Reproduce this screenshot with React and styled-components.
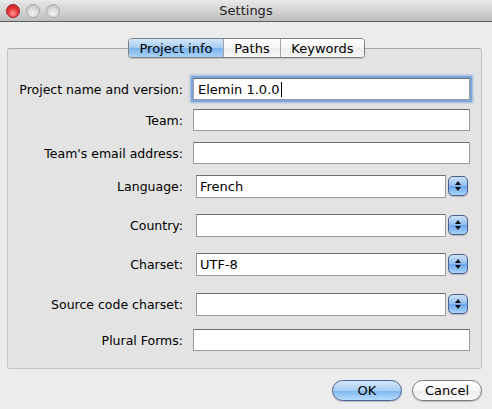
import styled, { createGlobalStyle } from "styled-components";

const GlobalStyle = createGlobalStyle`
  html, body {
    margin: 0;
    padding: 0;
    background: #ececec;
  }
  body {
    font-family: "DejaVu Sans", "Liberation Sans", sans-serif;
    color: #000;
  }
`;

const rows = [
  { label: "Project name and version:", value: "Elemin 1.0.0", focus: true, mt: 29 },
  { label: "Team:", value: "", mt: 9 },
  { label: "Team's email address:", value: "", mt: 11 },
  { label: "Language:", value: "French", combo: true, mt: 11 },
  { label: "Country:", value: "", combo: true, mt: 17 },
  { label: "Charset:", value: "UTF-8", combo: true, mt: 17 },
  { label: "Source code charset:", value: "", combo: true, mt: 18 },
  { label: "Plural Forms:", value: "", mt: 14 },
];

const tabs = [
  { name: "Project info", width: 94, active: true },
  { name: "Paths", width: 57 },
  { name: "Keywords", width: 84 },
];

const App = () => {
  return (
    <>
      <GlobalStyle />
      <Window>
        <TitleBar>
          <Lights>
            <Light $color="red" />
            <Light />
            <Light />
          </Lights>
          <Title>Settings</Title>
        </TitleBar>
        <Body>
          <TabBar>
            {tabs.map((t) => (
              <Tab key={t.name} $active={t.active} style={{ width: t.width }}>
                {t.name}
              </Tab>
            ))}
          </TabBar>
          <Panel>
            {rows.map((r) => (
              <Row key={r.label} $mt={r.mt}>
                <Label>{r.label}</Label>
                {r.combo ? (
                  <Combo>
                    <ComboField>{r.value}</ComboField>
                    <Stepper>
                      <svg width="8" height="12" viewBox="0 0 8 12">
                        <path d="M4 1 L7 5 L1 5 Z" fill="#111" />
                        <path d="M4 11 L7 7 L1 7 Z" fill="#111" />
                      </svg>
                    </Stepper>
                  </Combo>
                ) : (
                  <Field $focus={r.focus}>
                    {r.value}
                    {r.focus && <Caret />}
                  </Field>
                )}
              </Row>
            ))}
          </Panel>
          <ButtonBar>
            <PushButton $default>OK</PushButton>
            <PushButton>Cancel</PushButton>
          </ButtonBar>
        </Body>
      </Window>
    </>
  );
};

const Window = styled.div`
  width: 492px;
  height: 409px;
  background: #ececec;
  display: flex;
  flex-direction: column;
  overflow: hidden;
`;

const TitleBar = styled.div`
  height: 21px;
  border-bottom: 1px solid #5e5e5e;
  background: linear-gradient(#e9e9e9, #cfcfcf 60%, #bdbdbd);
  display: flex;
  align-items: center;
  position: relative;
`;

const Lights = styled.div`
  display: flex;
  gap: 6px;
  padding-left: 6px;
`;

const Light = styled.div`
  width: 14px;
  height: 14px;
  border-radius: 50%;
  box-sizing: border-box;
  border: 1px solid ${(p) => (p.$color === "red" ? "#a02020" : "#a8a8a8")};
  background: ${(p) =>
    p.$color === "red"
      ? "radial-gradient(circle at 50% 70%, #ff9a9a 0%, #e83c3c 45%, #b51a1a 100%)"
      : "radial-gradient(circle at 50% 70%, #f4f4f4 0%, #d8d8d8 50%, #b8b8b8 100%)"};
`;

const Title = styled.div`
  position: absolute;
  left: 0;
  right: 0;
  top: 0;
  line-height: 21px;
  text-align: center;
  font-size: 13px;
  color: #222;
  pointer-events: none;
`;

const Body = styled.div`
  flex: 1;
  display: flex;
  flex-direction: column;
  padding: 16px 10px 0 7px;
`;

const TabBar = styled.div`
  align-self: flex-start;
  margin-left: 121px;
  display: flex;
  height: 20px;
  box-sizing: border-box;
  border: 1px solid #7f7f7f;
  border-radius: 4px;
  overflow: hidden;
  position: relative;
  z-index: 1;
  box-shadow: 0 1px 1px rgba(0, 0, 0, 0.15);
`;

const Tab = styled.div`
  box-sizing: border-box;
  display: flex;
  align-items: center;
  justify-content: center;
  font-size: 13px;
  color: #000;
  border-left: 1px solid #a5a5a5;
  background: ${(p) =>
    p.$active
      ? "linear-gradient(#d3e6f8 0%, #a3cbf1 50%, #7bb3ec 51%, #a9d3fa 100%)"
      : "linear-gradient(#ffffff 0%, #f6f6f6 50%, #ececec 51%, #f7f7f7 100%)"};
  &:first-child {
    border-left: none;
  }
`;

const Panel = styled.div`
  margin-top: -10px;
  height: 321px;
  box-sizing: border-box;
  background: #e3e3e3;
  border: 1px solid #c4c4c4;
  border-top-color: #a9a9a9;
  border-radius: 3px;
  display: flex;
  flex-direction: column;
  padding-right: 11px;
`;

const Row = styled.div`
  display: flex;
  align-items: center;
  margin-top: ${(p) => p.$mt}px;
  height: 22px;
`;

const Label = styled.div`
  width: 175px;
  text-align: right;
  font-size: 12.5px;
  margin-right: 10px;
  white-space: nowrap;
`;

const Field = styled.div`
  flex: 1;
  height: 22px;
  box-sizing: border-box;
  background: #fff;
  border: 1px solid #9a9a9a;
  border-top-color: #6f6f6f;
  font-size: 13px;
  padding-left: 4px;
  display: flex;
  align-items: center;
  box-shadow: ${(p) =>
    p.$focus ? "0 0 0 2px #7aa7e0, 0 0 2px 3px rgba(90, 140, 210, 0.5)" : "none"};
`;

const Caret = styled.span`
  display: inline-block;
  width: 1px;
  height: 15px;
  background: #000;
  margin-left: 1px;
`;

const Combo = styled.div`
  flex: 1;
  display: flex;
  align-items: center;
  margin-left: 3px;
  margin-right: 2px;
  gap: 2px;
`;

const ComboField = styled.div`
  flex: 1;
  height: 23px;
  box-sizing: border-box;
  background: #fff;
  border: 1px solid #9a9a9a;
  border-top-color: #6f6f6f;
  font-size: 13px;
  padding-left: 3px;
  display: flex;
  align-items: center;
`;

const Stepper = styled.div`
  width: 20px;
  height: 20px;
  box-sizing: border-box;
  border: 1px solid #4a5f8a;
  border-radius: 5px;
  background: linear-gradient(#cfe3f9 0%, #8fbdf0 50%, #6aa6ea 51%, #a8d4fb 100%);
  display: flex;
  align-items: center;
  justify-content: center;
  box-shadow: 0 1px 1px rgba(0, 0, 0, 0.2);
`;

const ButtonBar = styled.div`
  display: flex;
  justify-content: flex-end;
  gap: 10px;
  margin-top: 11px;
`;

const PushButton = styled.div`
  width: 70px;
  height: 21px;
  box-sizing: border-box;
  border-radius: 11px;
  border: 1px solid ${(p) => (p.$default ? "#4b5f94" : "#7a7a7a")};
  background: ${(p) =>
    p.$default
      ? "linear-gradient(#d6e8fa 0%, #a5cdf3 50%, #7db6ee 51%, #b5dcfc 100%)"
      : "linear-gradient(#ffffff 0%, #f7f7f7 50%, #ebebeb 51%, #fafafa 100%)"};
  display: flex;
  align-items: center;
  justify-content: center;
  font-size: 13px;
  color: #000;
  box-shadow: 0 1px 1px rgba(0, 0, 0, 0.2);
`;

export default App;
